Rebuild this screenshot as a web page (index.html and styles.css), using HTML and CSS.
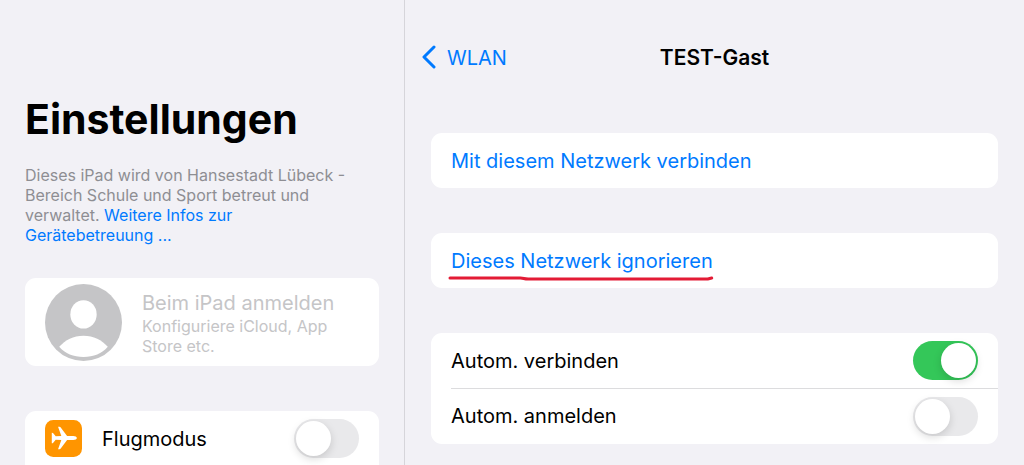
FILE: index.html
```html
<!DOCTYPE html>
<html lang="de">

<head>
    <meta charset="UTF-8">
    <meta name="viewport" content="width=device-width, initial-scale=1.0">
    <title>Einstellungen</title>
    <link rel="stylesheet" href="styles.css">
</head>

<body>
    <div class="settings">
        <aside class="sidebar">
            <h1>Einstellungen</h1>
            <p class="managed">Dieses iPad wird von Hansestadt Lübeck - Bereich Schule und Sport betreut und verwaltet. <a href="#">Weitere Infos zur Gerätebetreuung ...</a></p>

            <button class="card account" type="button" disabled>
                <svg class="avatar" viewBox="0 0 76 76" aria-hidden="true">
                    <circle cx="38" cy="38" r="38" fill="#c5c5c7" />
                    <ellipse cx="38" cy="30" rx="13" ry="14" fill="#fff" />
                    <path d="M14 62C20 55 28 51 38 51s18 4 24 11C56 69 48 72 38 72S20 69 14 62Z" fill="#fff" />
                </svg>
                <span class="account-text">
                    <span class="account-title">Beim iPad anmelden</span>
                    <span class="account-hint">Konfiguriere iCloud, App Store etc.</span>
                </span>
            </button>

            <div class="card list">
                <div class="row">
                    <svg class="app-icon" viewBox="0 0 36 36" aria-hidden="true">
                        <rect width="36" height="36" rx="8" fill="#ff9500" />
                        <path d="M31 17.500C31 16.300 29.500 15.600 27.500 15.600H21.500L15.300 7.200C15 6.800 14.600 6.600 14.100 6.600H12.700L15.900 15.600L10.400 15.800L8 12.900C7.700 12.500 7.300 12.300 6.600 12.400V22.600C7.300 22.700 7.700 22.500 8 22.100L10.400 19.200L15.900 19.400L12.700 28.400H14.100C14.600 28.400 15 28.200 15.300 27.800L21.500 19.400H27.500C29.500 19.400 31 18.700 31 17.500Z" fill="#fff" />
                    </svg>
                    <label for="airplane">Flugmodus</label>
                    <input class="switch" type="checkbox" id="airplane">
                </div>
            </div>
        </aside>

        <main class="detail">
            <header class="navbar">
                <a class="back" href="#">
                    <svg class="chevron" viewBox="0 0 16 26" aria-hidden="true">
                        <path d="M13 2L3 12L13 22" fill="none" stroke="#007aff" stroke-width="3" stroke-linecap="round" stroke-linejoin="round" />
                    </svg>
                    WLAN
                </a>
                <h2>TEST-Gast</h2>
            </header>

            <div class="card">
                <button class="row action" type="button">Mit diesem Netzwerk verbinden</button>
            </div>

            <div class="card">
                <button class="row action" type="button">
                    <span class="marked">
                        Dieses Netzwerk ignorieren
                        <svg class="marker" viewBox="0 0 268 6" preserveAspectRatio="none" aria-hidden="true">
                            <path d="M2 2H73C77 2 76 3 81 3H262L266 2" fill="none" stroke="#e31b35" stroke-width="3" stroke-linecap="round" stroke-linejoin="round" />
                        </svg>
                    </span>
                </button>
            </div>

            <div class="card">
                <div class="row">
                    <label for="autoJoin">Autom. verbinden</label>
                    <input class="switch" type="checkbox" id="autoJoin" checked>
                </div>
                <div class="row">
                    <label for="autoLogin">Autom. anmelden</label>
                    <input class="switch" type="checkbox" id="autoLogin">
                </div>
            </div>
        </main>
    </div>
</body>

</html>
```
FILE: styles.css
```css
* {
    box-sizing: border-box;
}

body {
    margin: 0;
    font-family: Inter, "Liberation Sans", sans-serif;
    font-size: 20px;
    line-height: 26px;
    color: #000;
    background-color: #f2f1f6;
}

h1,
h2,
p {
    margin: 0;
}

a {
    color: #007aff;
    text-decoration: none;
}

button {
    font: inherit;
    border: none;
    text-align: left;
}

.settings {
    display: flex;
    height: 100vh;
}

/* Sidebar */
.sidebar {
    flex: 0 0 405px;
    padding: 94px 25px 0;
    border-right: 1px solid #d6d5da;
    overflow-y: auto;
    scrollbar-width: none;
}

h1 {
    font-size: 41px;
    font-weight: 700;
    line-height: 50px;
}

.managed {
    margin-top: 21px;
    padding-right: 20px;
    font-size: 16px;
    line-height: 20px;
    color: #8e8e93;
}

.card {
    background-color: #fff;
    border-radius: 11px;
}

.account {
    display: flex;
    align-items: center;
    gap: 20px;
    width: 100%;
    margin: 33px 0 45px;
    padding: 6px 20px 5px;
    color: #c5c5c7;
}

.avatar {
    flex: none;
    width: 77px;
    height: 77px;
}

.account-title,
.account-hint {
    display: block;
}

.account-hint {
    font-size: 16px;
    line-height: 20px;
}

.list {
    padding-bottom: 20px;
}

/* Rows */
.row {
    display: flex;
    align-items: center;
    width: 100%;
    height: 55px;
    padding: 0 20px;
    position: relative;
}

.row label {
    flex: 1;
}

.row + .row {
    height: 56px;
}

.row + .row::before {
    content: "";
    position: absolute;
    top: 0;
    left: 20px;
    right: 0;
    border-top: 1px solid #dcdcde;
}

.app-icon {
    width: 37px;
    height: 37px;
    margin-right: 20px;
}

.action {
    color: #007aff;
    background: none;
    cursor: pointer;
}

.switch {
    appearance: none;
    display: flex;
    width: 65px;
    height: 39px;
    margin: 0;
    padding: 2px;
    border-radius: 20px;
    background-color: #e9e9eb;
    cursor: pointer;
}

.switch::before {
    content: "";
    width: 35px;
    height: 35px;
    border-radius: 50%;
    background-color: #fff;
    box-shadow: 0 3px 8px rgba(0, 0, 0, 0.15);
}

.switch:checked {
    justify-content: flex-end;
    background-color: #34c759;
}

/* Detail pane */
.detail {
    flex: 1;
    display: flex;
    flex-direction: column;
    gap: 45px;
    padding: 45px 26px 0;
}

.navbar {
    display: grid;
    grid-template-columns: 1fr auto 1fr;
    align-items: center;
    margin: 0 -10px 17px;
}

.back {
    display: flex;
    align-items: center;
    gap: 10px;
}

.chevron {
    width: 16px;
    height: 26px;
}

h2 {
    font-size: 21px;
    font-weight: 600;
    line-height: 26px;
}

.marked {
    position: relative;
}

/* hand-drawn red line under the label */
.marker {
    position: absolute;
    left: -3px;
    bottom: -8px;
    width: calc(100% + 4px);
    height: 6px;
}
```
